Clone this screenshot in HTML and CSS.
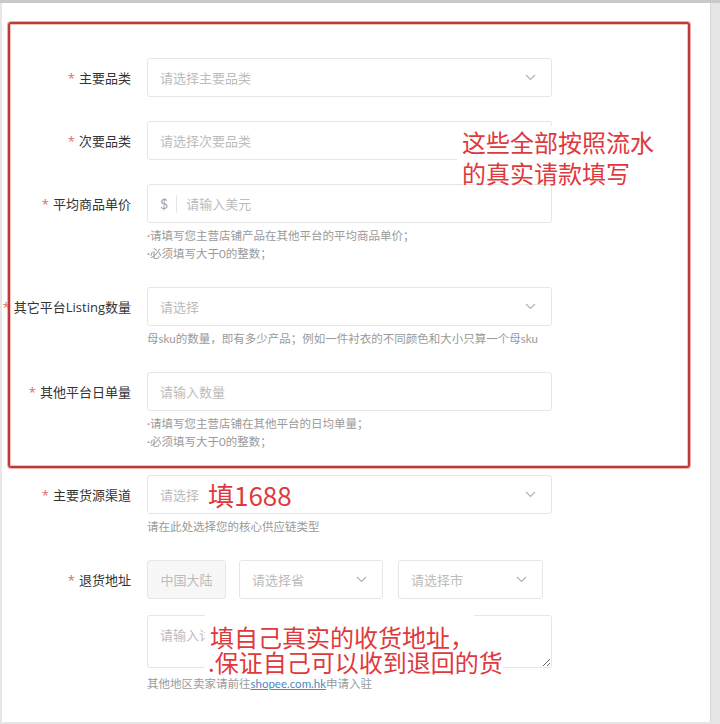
FILE: index.html
```html
<!DOCTYPE html>
<html lang="zh-CN">
<head>
<meta charset="utf-8">
<title>店铺信息</title>
<link rel="stylesheet" href="styles.css">
</head>
<body>
<div class="page">
  <div class="form">
    <div class="item">
      <div class="label"><span class="req">*</span>主要品类</div>
      <div class="field">
        <div class="box select"><span class="ph">请选择主要品类</span><svg class="chev" viewBox="0 0 11 7" width="11" height="7"><path d="M1 1L5.5 5.5L10 1"/></svg></div>
      </div>
    </div>
    <div class="item">
      <div class="label"><span class="req">*</span>次要品类</div>
      <div class="field">
        <div class="box select"><span class="ph">请选择次要品类</span><svg class="chev" viewBox="0 0 11 7" width="11" height="7"><path d="M1 1L5.5 5.5L10 1"/></svg></div>
      </div>
    </div>
    <div class="item">
      <div class="label"><span class="req">*</span>平均商品单价</div>
      <div class="field">
        <div class="box prefix"><span class="dollar">$</span><span class="sep"></span><input class="txt" type="text" placeholder="请输入美元"></div>
        <div class="help">·请填写您主营店铺产品在其他平台的平均商品单价；<br>·必须填写大于0的整数；</div>
      </div>
    </div>
    <div class="item">
      <div class="label"><span class="req">*</span>其它平台Listing数量</div>
      <div class="field">
        <div class="box select"><span class="ph">请选择</span><svg class="chev" viewBox="0 0 11 7" width="11" height="7"><path d="M1 1L5.5 5.5L10 1"/></svg></div>
        <div class="help">母sku的数量，即有多少产品；例如一件衬衣的不同颜色和大小只算一个母sku</div>
      </div>
    </div>
    <div class="item">
      <div class="label"><span class="req">*</span>其他平台日单量</div>
      <div class="field">
        <div class="box"><input class="txt" type="text" placeholder="请输入数量"></div>
        <div class="help">·请填写您主营店铺在其他平台的日均单量；<br>·必须填写大于0的整数；</div>
      </div>
    </div>
    <div class="item">
      <div class="label"><span class="req">*</span>主要货源渠道</div>
      <div class="field">
        <div class="box select"><span class="ph">请选择</span><svg class="chev" viewBox="0 0 11 7" width="11" height="7"><path d="M1 1L5.5 5.5L10 1"/></svg></div>
        <div class="help">请在此处选择您的核心供应链类型</div>
      </div>
    </div>
    <div class="item">
      <div class="label"><span class="req">*</span>退货地址</div>
      <div class="field">
        <div class="addr">
          <div class="box country">中国大陆</div>
          <div class="box select prov"><span class="ph">请选择省</span><svg class="chev" viewBox="0 0 11 7" width="11" height="7"><path d="M1 1L5.5 5.5L10 1"/></svg></div>
          <div class="box select city"><span class="ph">请选择市</span><svg class="chev" viewBox="0 0 11 7" width="11" height="7"><path d="M1 1L5.5 5.5L10 1"/></svg></div>
        </div>
        <textarea class="area" placeholder="请输入详细地址"></textarea>
        <div class="help foot">其他地区卖家请前往<a class="link" href="#">shopee.com.hk</a>申请入驻</div>
      </div>
    </div>
  </div>

  <div class="redbox"></div>
  <div class="note note-top">这些全部按照流水<br>的真实请款填写</div>
  <div class="note note-1688">填1688</div>
  <div class="note note-addr">
    <div class="l1">填自己真实的收货地址，</div>
    <div class="l2">.保证自己可以收到退回的货</div>
  </div>
</div>
</body>
</html>
```

FILE: styles.css
```css
html, body {
  margin: 0;
  padding: 0;
}
body {
  background: #e6e6e6;
  border-top: 3px solid #c9c9c9;
  font-family: Lato, "Noto Sans CJK SC", sans-serif;
}
.page {
  position: relative;
  margin: 0 9px 0 2px;
  height: 719px;
  background: #ffffff;
  border-right: 1px solid #d8d8d8;
  overflow: hidden;
}
.form {
  display: flex;
  flex-direction: column;
  gap: 24px;
  padding-top: 55px;
}
.item {
  display: flex;
  align-items: flex-start;
}
.label {
  flex: none;
  width: 129px;
  height: 39px;
  margin-right: 16px;
  display: flex;
  align-items: center;
  justify-content: flex-end;
  white-space: nowrap;
  font-family: "Open Sans", "Noto Sans CJK SC", sans-serif;
  font-size: 13px;
  color: #333333;
}
.req {
  color: #e26b6b;
  margin-right: 4px;
}
.field {
  width: 405px;
  flex: none;
}
.box {
  box-sizing: border-box;
  height: 39px;
  border: 1px solid #e6e6e6;
  border-radius: 3px;
  background: #ffffff;
  display: flex;
  align-items: center;
  padding: 0 15px 0 12px;
}
.ph {
  flex: 1;
  color: #bcbcbc;
  font-size: 13px;
  white-space: nowrap;
}
.chev {
  flex: none;
}
.chev path {
  fill: none;
  stroke: #b3b3b3;
  stroke-width: 1.2;
}
.txt {
  flex: 1;
  min-width: 0;
  border: none;
  outline: none;
  padding: 0;
  background: transparent;
  font-family: Lato, "Noto Sans CJK SC", sans-serif;
  font-size: 13px;
  color: #333333;
}
.txt::placeholder,
.area::placeholder {
  color: #bcbcbc;
}
.dollar {
  color: #a0a0a0;
  font-size: 14px;
}
.sep {
  width: 1px;
  height: 18px;
  background: #e6e6e6;
  margin: 0 9px 0 8px;
}
.help {
  margin-top: 4px;
  font-size: 11.5px;
  line-height: 18px;
  color: #9a9a9a;
  white-space: nowrap;
}
.addr {
  display: flex;
}
.country {
  width: 79px;
  padding: 0;
  justify-content: center;
  background: #f7f7f7;
  color: #bcbcbc;
  font-size: 13px;
}
.prov {
  width: 144px;
  margin-left: 13px;
}
.city {
  width: 145px;
  margin-left: 15px;
}
.area {
  display: block;
  box-sizing: border-box;
  width: 405px;
  height: 53px;
  margin-top: 16px;
  padding: 9px 12px;
  border: 1px solid #e6e6e6;
  border-radius: 3px;
  resize: vertical;
  outline: none;
  font-family: Lato, "Noto Sans CJK SC", sans-serif;
  font-size: 13px;
}
.foot {
  margin-top: 7px;
}
.link {
  color: #4f86c0;
  text-decoration: underline;
}
.redbox {
  position: absolute;
  left: 6px;
  top: 19px;
  width: 682px;
  height: 446px;
  box-sizing: border-box;
  border: 2px solid #bb3c37;
  border-radius: 3px;
  box-shadow: 0 0 0 1px rgba(226, 120, 116, 0.6), inset 0 0 0 1px rgba(226, 120, 116, 0.45);
}
.note {
  position: absolute;
  color: #e0393d;
  font-family: "Noto Sans CJK SC", sans-serif;
  white-space: nowrap;
}
.note-top {
  left: 455px;
  top: 123px;
  height: 57px;
  padding: 0 8px 0 5px;
  background: #ffffff;
  font-size: 24px;
  line-height: 31px;
}
.note-1688 {
  left: 204px;
  top: 477px;
  padding: 0 2px;
  background: #ffffff;
  font-size: 26px;
  line-height: 30px;
}
.note-addr {
  left: 203px;
  top: 612px;
  font-size: 24px;
  line-height: 25px;
}
.note-addr .l1,
.note-addr .l2 {
  width: fit-content;
  background: #ffffff;
}
.note-addr .l1 {
  padding: 9px 0 0 5px;
}
.note-addr .l2 {
  padding-left: 3px;
}
```
